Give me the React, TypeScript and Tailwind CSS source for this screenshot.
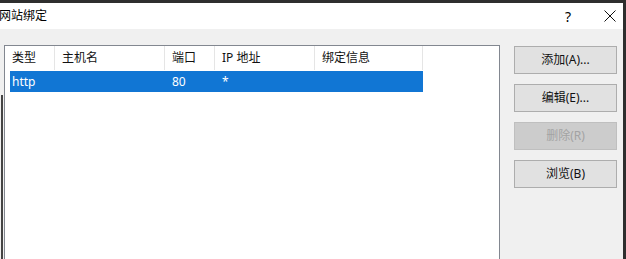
import React from "react";

const font = { fontFamily: '"Noto Sans", "Noto Sans CJK SC", sans-serif' };

const cols = [
  { label: "类型", w: "w-[50px]" },
  { label: "主机名", w: "w-[110px]" },
  { label: "端口", w: "w-[50px]" },
  { label: "IP 地址", w: "w-[100px]" },
  { label: "绑定信息", w: "w-[108px]" },
];

function Btn({ children, disabled }: { children: React.ReactNode; disabled?: boolean }) {
  return (
    <div
      className={
        "h-[28px] w-[103px] flex items-center justify-center border text-[12px] " +
        (disabled
          ? "bg-[#cccccc] border-[#bfbfbf] text-[#a3a3a3]"
          : "bg-[#e1e1e1] border-[#adadad] text-[#111]")
      }
    >
      {children}
    </div>
  );
}

export default function App() {
  return (
    <div className="w-[626px] h-[259px] bg-[#2e2e2e] overflow-hidden relative" style={font}>
      <div className="pt-[3px] pr-[3px] h-full flex flex-col">
        <div className="flex-1 flex flex-col bg-[#f0f0f0]">
          <div className="h-[26px] bg-white flex items-center text-[12px] text-black">
            <span className="-ml-[1px]">网站绑定</span>
            <span className="ml-auto mr-[33px] text-[14px]">?</span>
            <svg width="12" height="12" viewBox="0 0 12 12" className="mr-[7px]">
              <path d="M0.5 0.5 L11.5 11.5 M11.5 0.5 L0.5 11.5" stroke="#111" strokeWidth="1" />
            </svg>
          </div>
          <div className="flex-1 flex pt-[16px] pl-[4px]">
            <div className="w-[496px] border-t border-l border-r border-[#828790] bg-white flex flex-col text-[12px] text-[#111]">
              <div className="flex h-[24px]">
                {cols.map((c) => (
                  <div key={c.label} className={c.w + " border-r border-[#e5e5e5] flex items-center pl-[7px]"}>
                    {c.label}
                  </div>
                ))}
              </div>
              <div className="flex h-[21px] mt-[1px] ml-[5px] w-[413px] bg-[#1176d4] text-white items-center">
                <div className="w-[45px] pl-[2px]">http</div>
                <div className="w-[110px]"></div>
                <div className="w-[50px] pl-[7px]">80</div>
                <div className="w-[100px] pl-[7px]">*</div>
              </div>
            </div>
            <div className="ml-[14px] pt-[1px] flex flex-col gap-[10px]">
              <Btn>添加(A)...</Btn>
              <Btn>编辑(E)...</Btn>
              <Btn disabled>删除(R)</Btn>
              <Btn>浏览(B)</Btn>
            </div>
          </div>
        </div>
      </div>
      <div className="absolute left-[1px] top-[95px] w-[2px] h-[164px] bg-[#444]" />
    </div>
  );
}
